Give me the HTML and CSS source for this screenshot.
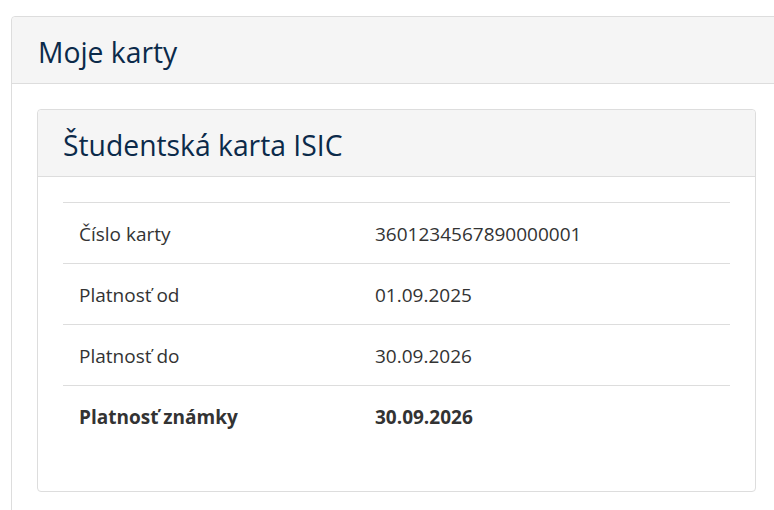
FILE: index.html
```html
<!DOCTYPE html>
<html lang="sk">
<head>
    <meta charset="UTF-8">
    <title>Moje karty</title>
    <link rel="stylesheet" href="styles.css">
</head>
<body>
    <div class="panel">
        <div class="panel-heading">
            <h2>Moje karty</h2>
        </div>
        <div class="panel-body">
            <div class="card">
                <div class="card-heading">
                    <h3>Študentská karta ISIC</h3>
                </div>
                <div class="card-body">
                    <table class="card-table">
                        <tr>
                            <td class="label">Číslo karty</td>
                            <td>3601234567890000001</td>
                        </tr>
                        <tr>
                            <td class="label">Platnosť od</td>
                            <td>01.09.2025</td>
                        </tr>
                        <tr>
                            <td class="label">Platnosť do</td>
                            <td>30.09.2026</td>
                        </tr>
                        <tr class="strong">
                            <td class="label">Platnosť známky</td>
                            <td>30.09.2026</td>
                        </tr>
                    </table>
                </div>
            </div>
        </div>
    </div>
</body>
</html>
```

FILE: styles.css
```css
* {
    margin: 0;
    padding: 0;
    box-sizing: border-box;
}

body {
    font-family: 'Open Sans', 'Noto Sans', sans-serif;
    color: #333;
    background: #fff;
    padding: 16px 0 0 11px;
    overflow: hidden;
}

.panel {
    width: 771px;
    border: 1px solid #ddd;
    border-radius: 4px;
    background: #fff;
}

.panel-heading {
    background: #f5f5f5;
    border-bottom: 1px solid #ddd;
    border-radius: 4px 4px 0 0;
    padding: 3px 26px 0;
    height: 67px;
    display: flex;
    align-items: center;
}

.panel-heading h2,
.card-heading h3 {
    font-size: 28.3px;
    font-weight: 400;
    color: #0b2a4a;
}

.panel-body {
    padding: 25px;
}

.card {
    width: 719px;
    border: 1px solid #ddd;
    border-radius: 4px;
}

.card-heading {
    background: #f5f5f5;
    border-bottom: 1px solid #ddd;
    border-radius: 4px 4px 0 0;
    padding: 3px 25px 0;
    height: 67px;
    display: flex;
    align-items: center;
}

.card-body {
    padding: 25px 25px 45px;
}

.card-table {
    width: 100%;
    border-collapse: collapse;
    font-size: 19px;
}

.card-table td {
    border-top: 1px solid #ddd;
    padding: 18px 16px 16px;
    line-height: 26px;
}

.card-table .label {
    width: 296px;
}

.card-table .strong td {
    font-weight: 700;
}
```
